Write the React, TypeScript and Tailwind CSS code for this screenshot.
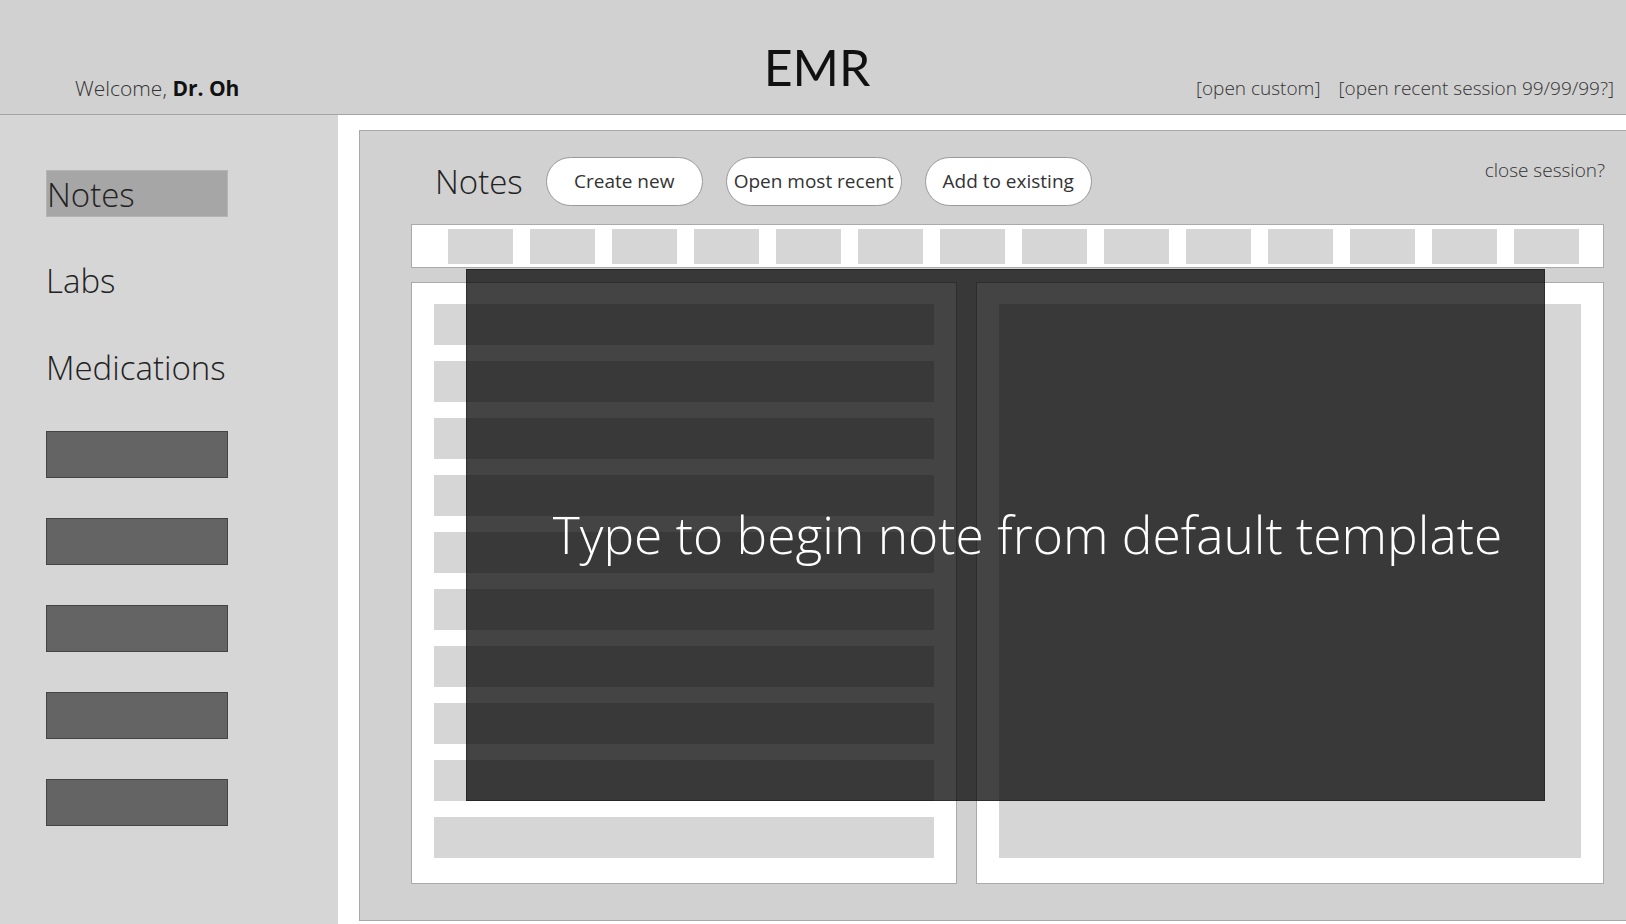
import React from 'react';

const SIDE_LINKS = ['Notes', 'Labs', 'Medications'];
const TOOL_SLOTS = Array.from({ length: 14 }, (_, i) => i);
const NOTE_ROWS = Array.from({ length: 10 }, (_, i) => i);

const font = { fontFamily: '"Open Sans", "Noto Sans", sans-serif' };

export default function App() {
  return (
    <div className="w-[1626px] h-[924px] overflow-hidden bg-white text-[#222]" style={font}>
      {/* Header */}
      <header className="h-[115px] bg-[#d1d1d1] border-b border-[#a3a3a3] grid grid-cols-[1fr_auto_1fr] items-end">
        <div className="pl-[75px] mb-[15px] text-[21px] leading-none font-light text-[#333]">
          Welcome, <span className="font-bold text-[#111]">Dr. Oh</span>
        </div>
        <div
          className="mb-[22px] text-[50px] leading-none text-[#111] translate-x-[4px]"
          style={{ fontFamily: 'Lato, "Liberation Sans", sans-serif' }}
        >
          EMR
        </div>
        <div className="flex justify-end gap-[18px] pr-[12px] mb-[16px] text-[19px] leading-none font-light text-[#333]">
          <span>[open custom]</span>
          <span>[open recent session 99/99/99?]</span>
        </div>
      </header>

      <div className="flex h-[809px]">
        {/* Sidebar */}
        <aside className="w-[338px] shrink-0 bg-[#d6d6d6] pt-[55px] pl-[46px] flex flex-col gap-[40px]">
          {SIDE_LINKS.map((l, i) => (
            <div
              key={l}
              className={`w-[182px] h-[47px] text-[33px] leading-[47px] font-light whitespace-nowrap ${i === 0 ? 'bg-[#a6a6a6] border border-[#b4b4b4] leading-[45px]' : ''}`}
            >
              {l}
            </div>
          ))}
          {[0, 1, 2, 3, 4].map(i => (
            <div key={i} className="w-[182px] h-[47px] bg-[#646464] border border-[#444]" />
          ))}
        </aside>

        {/* Main */}
        <main className="flex-1 pl-[21px] pt-[15px] pb-[3px] flex">
          <div className="relative flex-1 bg-[#d1d1d1] border border-r-0 border-[#a8a8a8] pl-[51px] pr-[22px] pt-[26px] pb-[36px] flex flex-col">
            {/* Title row */}
            <div className="flex items-center h-[49px]">
              <h2 className="ml-[24px] text-[33px] leading-none font-light text-[#222]">Notes</h2>
              <div className="flex gap-[23px] ml-[23px]">
                <button className="w-[157px] h-[49px] rounded-full bg-white border border-[#999] text-[19px] leading-none text-[#333]">Create new</button>
                <button className="w-[176px] h-[49px] rounded-full bg-white border border-[#999] text-[19px] leading-none text-[#333]">Open most recent</button>
                <button className="w-[167px] h-[49px] rounded-full bg-white border border-[#999] text-[19px] leading-none text-[#333]">Add to existing</button>
              </div>
              <span className="ml-auto self-start mt-[4px] -mr-[1px] text-[19px] leading-none font-light text-[#333]">close session?</span>
            </div>

            {/* Toolbar */}
            <div className="mt-[18px] h-[44px] bg-white border border-[#aaa] flex items-center gap-[17px] pl-[36px]">
              {TOOL_SLOTS.map(i => (
                <div key={i} className="w-[65px] h-[35px] bg-[#d6d6d6]" />
              ))}
            </div>

            {/* Panes */}
            <div className="mt-[14px] flex-1 flex gap-[19px]">
              <div className="w-[546px] bg-white border border-[#aaa] pt-[21px] px-[22px] flex flex-col gap-[16px]">
                {NOTE_ROWS.map(i => (
                  <div key={i} className="h-[41px] bg-[#d6d6d6]" />
                ))}
              </div>
              <div className="flex-1 bg-white border border-[#aaa] pt-[21px] px-[22px] pb-[25px] flex">
                <div className="flex-1 bg-[#d6d6d6]" />
              </div>
            </div>

            {/* Overlay */}
            <div className="absolute left-[106px] top-[138px] w-[1079px] h-[532px] bg-black/[0.735] border border-black/30 flex items-center justify-center pl-[44px]">
              <span className="text-[51.5px] leading-none font-light text-white whitespace-nowrap">Type to begin note from default template</span>
            </div>
          </div>
        </main>
      </div>
    </div>
  );
}
